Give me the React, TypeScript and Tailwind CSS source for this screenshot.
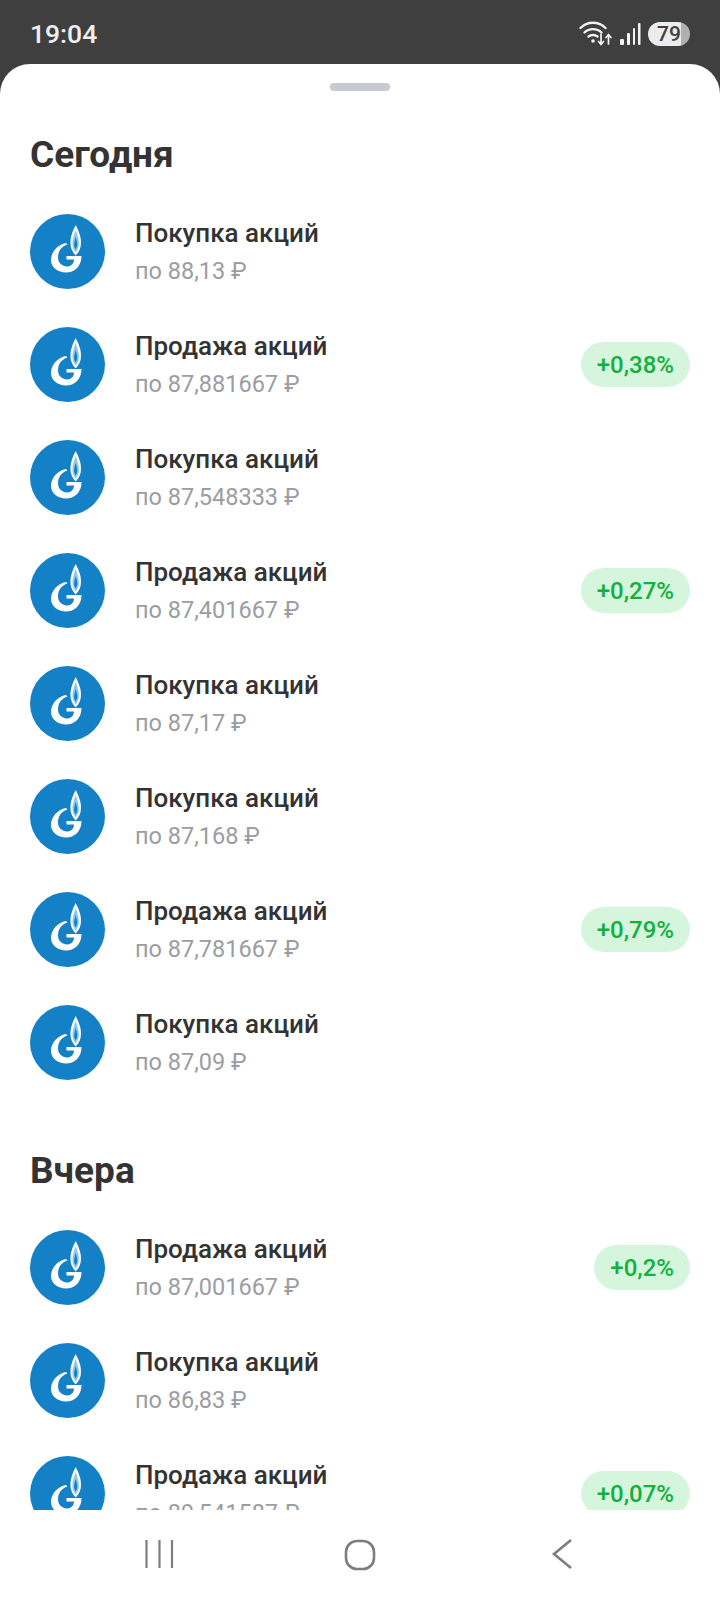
const Logo = () => (
  <svg width="75" height="75" viewBox="0 0 75 75" className="shrink-0">
    <circle cx="37.5" cy="37.5" r="37.5" fill="#1480c6" />
    <path d="M45.7 11 C42.8 17 40.4 22 40.4 29 C40.4 34 42.3 38 45.7 41.5 C49.1 38 51 34 51 29 C51 22 48.6 17 45.7 11 Z" fill="#ffffff" />
    <path d="M45.7 16 C44 21 42.4 25 42.4 29.5 C42.4 33 43.7 36 45.7 38.5 C47.7 36 49 33 49 29.5 C49 25 47.4 21 45.7 16 Z" fill="#8fc8ec" />
    <path d="M45.7 23 C44.8 26 44.1 28.5 44.1 30.5 C44.1 32.5 44.8 34 45.7 35.5 C46.6 34 47.3 32.5 47.3 30.5 C47.3 28.5 46.6 26 45.7 23 Z" fill="#1480c6" />
    <path d="M36 29 C27.5 30.5 21 38 21 46 C21 53.5 28 58.5 36 58.5 C44.5 58.5 51.5 52.5 51.5 42 L36.5 42 L36.5 45.5 L44 45.5 C44 50 40.5 52.5 37 52.5 C32.5 52.5 28 49 28 43.5 C28 37 31.5 32.5 37.5 30.5 Z" fill="#ffffff" />
  </svg>
);

const Row = ({ title, price, pct }: { title: string; price: string; pct?: string }) => (
  <div className="flex h-[113px] shrink-0 items-center">
    <Logo />
    <div className="ml-[30px] flex flex-1 flex-col self-start pt-[20px]">
      <div className="text-[26px] leading-[36px] font-medium text-[#333333]">{title}</div>
      <div className="mt-[2px] text-[23.5px] leading-[36px] text-[#9a9da3]">{price}</div>
    </div>
    {pct && (
      <div className="flex h-[45px] items-center rounded-full bg-[#d6f5dd] px-[16px] text-[24px] font-medium text-[#12b03f]">
        {pct}
      </div>
    )}
  </div>
);

const today = [
  ["Покупка акций", "по 88,13 ₽"],
  ["Продажа акций", "по 87,881667 ₽", "+0,38%"],
  ["Покупка акций", "по 87,548333 ₽"],
  ["Продажа акций", "по 87,401667 ₽", "+0,27%"],
  ["Покупка акций", "по 87,17 ₽"],
  ["Покупка акций", "по 87,168 ₽"],
  ["Продажа акций", "по 87,781667 ₽", "+0,79%"],
  ["Покупка акций", "по 87,09 ₽"],
];
const yesterday = [
  ["Продажа акций", "по 87,001667 ₽", "+0,2%"],
  ["Покупка акций", "по 86,83 ₽"],
  ["Продажа акций", "по 89,541587 ₽", "+0,07%"],
];

export default function App() {
  return (
    <div className="flex h-[1600px] w-[720px] flex-col overflow-hidden bg-[#3f3f3f] font-['Roboto',sans-serif]">
      <div className="flex h-[64px] shrink-0 items-center justify-between pt-[3px] pr-[30px] pl-[30px] text-white">
        <span className="text-[26.5px] font-medium text-[#f0f0f0]">19:04</span>
        <div className="flex items-center">
          <svg width="34" height="28" viewBox="0 0 34 28" fill="none" stroke="#f2f2f2" strokeLinecap="round">
            <path d="M1.5 8 C8 1 20 1 26.5 8" strokeWidth="2.4" />
            <path d="M5.5 12.5 C10 8 18 8 22.5 12.5" strokeWidth="2.4" />
            <path d="M9.5 16.5 C12 14.5 16 14.5 18.5 16.5" strokeWidth="2.4" />
            <circle cx="14" cy="21" r="1.8" fill="#f2f2f2" stroke="none" />
            <path d="M22 14 V24 M19.5 21.5 L22 24.5 L24.5 21.5" strokeWidth="1.7" />
            <path d="M29.5 24 V15 M27 17.5 L29.5 14.5 L32 17.5" strokeWidth="1.7" />
          </svg>
          <svg width="22" height="24" viewBox="0 0 22 24" className="ml-[6px]" fill="#f2f2f2">
            <rect x="1" y="17" width="4" height="6" rx="1" />
            <rect x="8" y="11" width="3" height="12" rx="1" />
            <rect x="14" y="6" width="2" height="17" rx="1" />
            <rect x="19" y="1" width="2.5" height="22" rx="1" />
          </svg>
          <div className="ml-[7px] flex h-[24px] w-[42px] items-center justify-center rounded-full bg-[linear-gradient(to_right,#ececec_78%,#b0b0b0_78%)] pt-[2px] text-[21px] leading-none font-medium text-[#3f3f3f]">
            79
          </div>
        </div>
      </div>
      <div className="flex min-h-0 flex-1 flex-col overflow-hidden rounded-t-[30px] bg-white">
        <div className="mx-auto mt-[19px] h-[8px] w-[60px] shrink-0 rounded-full bg-[#c8cad0]" />
        <div className="flex min-h-0 flex-1 flex-col overflow-hidden px-[30px]">
          <h2 className="mt-[42px] shrink-0 text-[37px] leading-[44px] font-bold text-[#333333]">Сегодня</h2>
          <div className="mt-[18px] flex flex-col">
            {today.map((r, i) => (
              <Row key={i} title={r[0]} price={r[1]} pct={r[2]} />
            ))}
          </div>
          <h2 className="mt-[50px] shrink-0 text-[37px] leading-[44px] font-bold text-[#333333]">Вчера</h2>
          <div className="mt-[18px] flex flex-col">
            {yesterday.map((r, i) => (
              <Row key={i} title={r[0]} price={r[1]} pct={r[2]} />
            ))}
          </div>
        </div>
        <div className="flex h-[90px] shrink-0 items-start bg-white pt-[29px] pl-[144px]">
          <svg width="30" height="30" viewBox="0 0 30 30" stroke="#7d7d7d" strokeWidth="2.2" fill="none">
            <path d="M2.5 1 V29 M15.5 1 V29 M28 1 V29" />
          </svg>
          <svg width="32" height="32" viewBox="0 0 32 32" stroke="#7d7d7d" strokeWidth="2.6" fill="none" className="ml-[170px]">
            <rect x="2" y="2" width="28" height="28" rx="11" />
          </svg>
          <svg width="22" height="30" viewBox="0 0 22 30" stroke="#7d7d7d" strokeWidth="2.6" fill="none" className="ml-[175px]">
            <path d="M20 1 L3 15 L20 29" />
          </svg>
        </div>
      </div>
    </div>
  );
}
